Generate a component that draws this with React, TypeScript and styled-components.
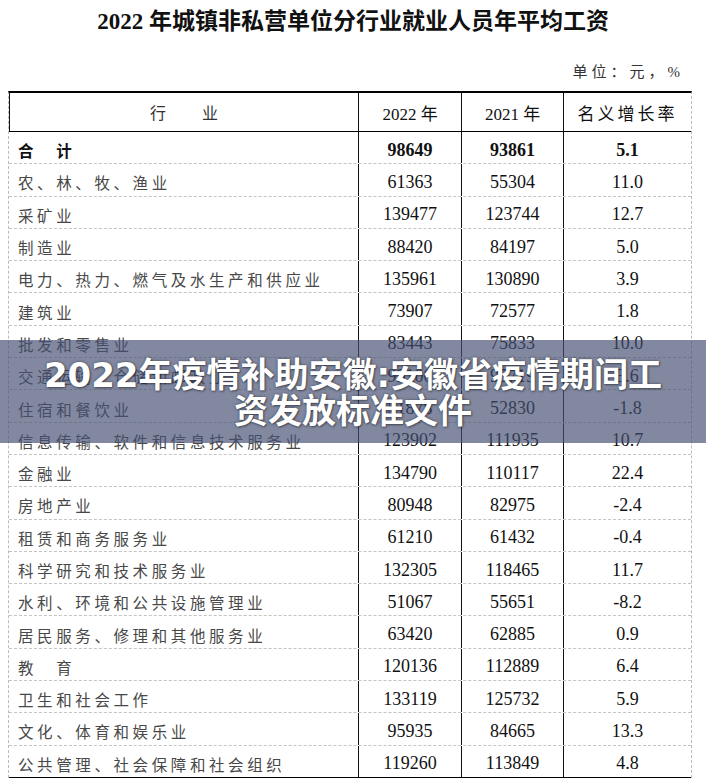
import styled, { createGlobalStyle } from 'styled-components';

const GlobalStyle = createGlobalStyle`
  html, body {
    margin: 0;
    padding: 0;
    background: #fff;
  }
  body {
    font-family: "Liberation Serif", "Noto Sans CJK SC", serif;
  }
`;

type Row = [string, string, string, string];

const rows: Row[] = [
  ['合　计', '98649', '93861', '5.1'],
  ['农、林、牧、渔业', '61363', '55304', '11.0'],
  ['采矿业', '139477', '123744', '12.7'],
  ['制造业', '88420', '84197', '5.0'],
  ['电力、热力、燃气及水生产和供应业', '135961', '130890', '3.9'],
  ['建筑业', '73907', '72577', '1.8'],
  ['批发和零售业', '83443', '75833', '10.0'],
  ['交通运输、仓储和邮政业', '99100', '95719', '3.6'],
  ['住宿和餐饮业', '51878', '52830', '-1.8'],
  ['信息传输、软件和信息技术服务业', '123902', '111935', '10.7'],
  ['金融业', '134790', '110117', '22.4'],
  ['房地产业', '80948', '82975', '-2.4'],
  ['租赁和商务服务业', '61210', '61432', '-0.4'],
  ['科学研究和技术服务业', '132305', '118465', '11.7'],
  ['水利、环境和公共设施管理业', '51067', '55651', '-8.2'],
  ['居民服务、修理和其他服务业', '63420', '62885', '0.9'],
  ['教　育', '120136', '112889', '6.4'],
  ['卫生和社会工作', '133119', '125732', '5.9'],
  ['文化、体育和娱乐业', '95935', '84665', '13.3'],
  ['公共管理、社会保障和社会组织', '119260', '113849', '4.8'],
];

const Page = styled.div`
  position: relative;
  width: 706px;
  height: 784px;
  overflow: hidden;
  background: #fff;
`;

const Title = styled.h1`
  margin: 0;
  height: 44px;
  line-height: 44px;
  text-align: center;
  font-size: 23px;
  font-weight: 700;
  color: #111;
  font-family: "Liberation Serif", "Noto Sans CJK SC", serif;
`;

const Unit = styled.div`
  margin: 18px 22px 0 0;
  height: 20px;
  line-height: 20px;
  text-align: right;
  font-size: 15px;
  letter-spacing: 4px;
  color: #333;
`;

const Table = styled.div`
  margin: 9px 0 0 8px;
  width: 684px;
  border-top: 2px solid #000;
  border-left: 1px dashed #bbb;
  border-right: 1px dashed #bbb;
  box-sizing: border-box;
`;

const Line = styled.div<{ $head?: boolean; $last?: boolean }>`
  display: grid;
  grid-template-columns: 349px 103px 102px 1fr;
  height: ${(p) => (p.$head ? '39px' : '32.3px')};
  box-sizing: border-box;
  border-bottom: ${(p) =>
    p.$head || p.$last ? '1px solid #000' : '1px dashed #c4c4c4'};
`;

const Cell = styled.div<{ $name?: boolean; $bold?: boolean; $head?: boolean; $spaced?: boolean }>`
  display: flex;
  align-items: center;
  justify-content: ${(p) => (p.$name ? 'flex-start' : 'center')};
  padding: ${(p) => (p.$head ? '0' : p.$name ? '5px 0 0 9px' : '5px 0 0 0')};
  border-left: ${(p) => (p.$name ? 'none' : '1px solid #111')};
  font-size: ${(p) => (p.$name ? '15.5px' : p.$head ? '17px' : '18px')};
  letter-spacing: ${(p) => (p.$name ? '3.6px' : p.$spaced ? '3px' : '0')};
  font-weight: ${(p) => (p.$bold ? 700 : 400)};
  color: ${(p) => (p.$name && !p.$bold ? '#484848' : '#111')};
  white-space: nowrap;
`;

const HeadName = styled.span`
  font-size: 16px;
  letter-spacing: 10px;
  margin-right: -10px;
  color: #333;
`;

const Banner = styled.div`
  position: absolute;
  left: 0;
  right: 0;
  top: 340px;
  height: 103px;
  background: rgba(70, 80, 115, 0.68);
  display: flex;
  flex-direction: column;
  align-items: center;
  justify-content: center;
  padding-top: 2px;
  box-sizing: border-box;
  font-family: "DejaVu Sans", "Noto Sans CJK SC", sans-serif;
  font-weight: 700;
  font-size: 34px;
  line-height: 36px;
  color: #fff;
  text-align: center;
  text-shadow: 0 0 3px rgba(0, 0, 0, 0.45), 1px 1px 2px rgba(0, 0, 0, 0.35);
`;

const App = () => {
  return (
    <Page>
      <GlobalStyle />
      <Title>2022 年城镇非私营单位分行业就业人员年平均工资</Title>
      <Unit>单位：元，%</Unit>
      <Table>
        <Line $head>
          <Cell $head>
            <HeadName>行　业</HeadName>
          </Cell>
          <Cell $head>2022 年</Cell>
          <Cell $head>2021 年</Cell>
          <Cell $head $spaced>名义增长率</Cell>
        </Line>
        {rows.map((r, i) => (
          <Line key={r[0]} $last={i === rows.length - 1}>
            <Cell $name $bold={i === 0}>{r[0]}</Cell>
            <Cell $bold={i === 0}>{r[1]}</Cell>
            <Cell $bold={i === 0}>{r[2]}</Cell>
            <Cell $bold={i === 0}>{r[3]}</Cell>
          </Line>
        ))}
      </Table>
      <Banner>
        <div>2022年疫情补助安徽:安徽省疫情期间工</div>
        <div>资发放标准文件</div>
      </Banner>
    </Page>
  );
};

export default App;
